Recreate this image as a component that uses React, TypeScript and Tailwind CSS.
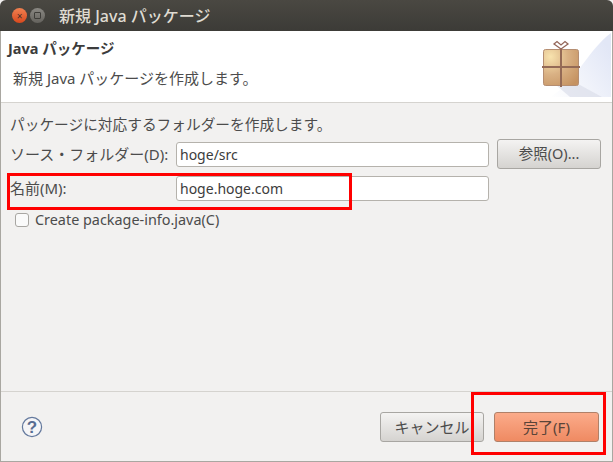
const FONT = '"Noto Sans", "Noto Sans CJK JP", sans-serif';

function PackageIcon() {
  return (
    <svg width="72" height="66" viewBox="0 0 72 66" className="absolute right-[0px] top-[1px]">
      <defs>
        <linearGradient id="wash" x1="0" y1="1" x2="1" y2="0.3">
          <stop offset="0" stopColor="#ffffff" />
          <stop offset="1" stopColor="#e2e7f6" />
        </linearGradient>
        <radialGradient id="box" cx="0.2" cy="0.2" r="1">
          <stop offset="0" stopColor="#f8e3ae" />
          <stop offset="0.5" stopColor="#d9b184" />
          <stop offset="1" stopColor="#c59261" />
        </radialGradient>
      </defs>
      <path d="M10 65 C36 50 48 18 71 1 L71 65 Z" fill="url(#wash)" />
      <path d="M16 53 L40 53 L62 65 L30 65 Z" fill="#dcdeea" opacity="0.7" />
      <rect x="3.5" y="17.5" width="35" height="36" rx="2" fill="url(#box)" stroke="#b58e72" />
      <rect x="20" y="13" width="2" height="42" fill="#946a56" />
      <rect x="2" y="34" width="38" height="2" fill="#946a56" />
      <path d="M21 17 L14 12 L17 9.5 L21 13 L25 9.5 L28 12 Z" fill="#fff" stroke="#94675a" strokeWidth="1.3" />
    </svg>
  );
}

function HelpIcon() {
  return (
    <svg width="22" height="22" viewBox="0 0 22 22">
      <circle cx="11" cy="11" r="9.6" fill="#f5f5f7" stroke="#64799d" strokeWidth="1.2" />
      <text x="11" y="17" textAnchor="middle" fontSize="17" fontWeight="700" fill="#586d92" fontFamily='"Liberation Sans", sans-serif'>?</text>
    </svg>
  );
}

function TextField({ value }: { value: string }) {
  return (
    <input
      readOnly
      value={value}
      className="h-[25px] w-[313px] rounded-[3px] border border-[#b5b2ac] bg-white px-[3px] text-[14px] text-[#3c3c3c] outline-none"
    />
  );
}

export default function App() {
  return (
    <div
      className="relative flex h-[462px] w-[613px] flex-col overflow-hidden bg-[#f2f1f0] text-[15px] text-[#4c4c4c]"
      style={{ fontFamily: FONT }}
    >
      {/* Title bar */}
      <div className="flex h-[31px] shrink-0 items-center rounded-t-[6px] bg-gradient-to-b from-[#4a4842] to-[#3c3b37] pl-[12px]">
        <span className="flex h-[15px] w-[15px] items-center justify-center rounded-full bg-gradient-to-b from-[#f08050] to-[#d8481c] text-[10px] leading-none text-[#46302a]">
          ×
        </span>
        <span className="ml-[3px] flex h-[15px] w-[15px] items-center justify-center rounded-full bg-gradient-to-b from-[#8a8883] to-[#64625d]">
          <span className="h-[7px] w-[7px] rounded-[1px] border border-[#3e3d39]" />
        </span>
        <span className="ml-[14px] text-[16px] font-medium leading-none text-[#dfdbd2]">新規 Java パッケージ</span>
      </div>

      <div className="flex min-h-0 flex-1 flex-col border-x border-b border-[#a9a7a1]">
        {/* Header */}
        <div className="relative h-[72px] shrink-0 border-b border-[#d5d3cf] bg-white pl-[7px]">
          <div className="pt-[7px] text-[14.5px] font-bold leading-[20px] text-[#3c3c3c]">Java パッケージ</div>
          <div className="mt-[10px] pl-[5px] leading-[20px]">新規 Java パッケージを作成します。</div>
          <PackageIcon />
        </div>

        {/* Form */}
        <div className="flex flex-1 flex-col pl-[9px] pt-[11px]">
          <div className="text-[14.7px] leading-[20px]">パッケージに対応するフォルダーを作成します。</div>
          <div className="mt-[5px] flex h-[30px] items-center">
            <span className="w-[166px] shrink-0 whitespace-nowrap">ソース・フォルダー(D):</span>
            <TextField value="hoge/src" />
            <button className="ml-[8px] h-[30px] w-[104px] rounded-[3px] border border-[#a8a6a2] bg-gradient-to-b from-[#f4f3f2] to-[#d5d3d0] text-[14.5px] text-[#4c4c4c]">
              参照(O)...
            </button>
          </div>
          <div className="mt-[7px] flex h-[25px] items-center">
            <span className="w-[166px] shrink-0">名前(M):</span>
            <TextField value="hoge.hoge.com" />
          </div>
          <label className="mt-[10px] flex items-center pl-[5px]">
            <span className="h-[14px] w-[14px] rounded-[3px] border border-[#a8a6a2] bg-[#fafafa]" />
            <span className="ml-[6px] text-[14.4px] leading-[18px]">Create package-info.java(C)</span>
          </label>
        </div>

        {/* Footer */}
        <div className="flex h-[70px] shrink-0 items-start border-t border-[#d5d3cf] pl-[20px] pr-[13px] pt-[20px]">
          <div className="pt-[4px]">
            <HelpIcon />
          </div>
          <div className="ml-auto flex gap-[10px]">
            <button className="h-[30px] w-[104px] rounded-[3px] border border-[#a8a6a2] bg-gradient-to-b from-[#f4f3f2] to-[#d5d3d0] text-[#4c4c4c]">
              キャンセル
            </button>
            <button className="h-[30px] w-[105px] rounded-[3px] border border-[#b08068] bg-gradient-to-b from-[#fbab8a] to-[#ef8a62] text-[#5a4438]">
              完了(F)
            </button>
          </div>
        </div>
      </div>

      {/* Red annotation boxes */}
      <div className="absolute left-[7px] top-[173px] h-[37px] w-[345px] border-[3px] border-[#ff0000]" />
      <div className="absolute left-[471px] top-[392px] h-[63px] w-[135px] border-[3px] border-[#ff0000]" />
    </div>
  );
}
